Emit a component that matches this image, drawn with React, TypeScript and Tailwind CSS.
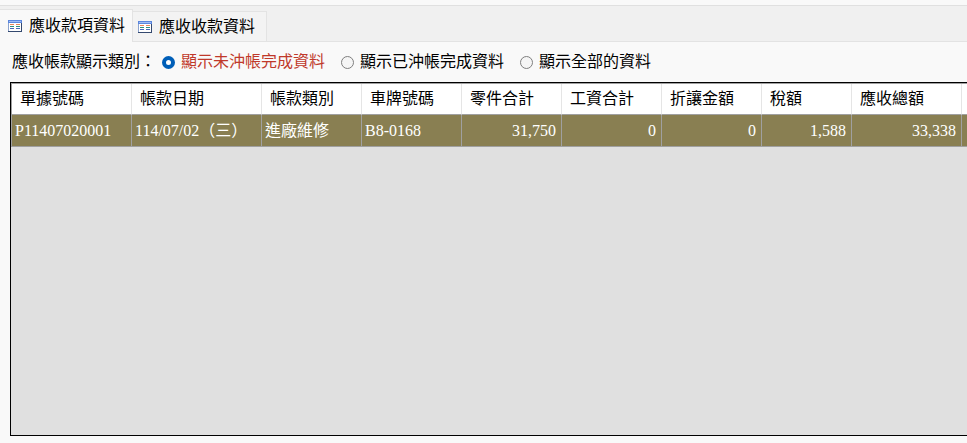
import React, { useState } from 'react';

type Tab = 'receivables' | 'collections';
type Filter = 'open' | 'settled' | 'all';

interface Column {
  key: string;
  label: string;
  width: string;
  numeric?: boolean;
}

const tabs: { id: Tab; label: string }[] = [
  { id: 'receivables', label: '應收款項資料' },
  { id: 'collections', label: '應收收款資料' },
];

const filters: { id: Filter; label: string }[] = [
  { id: 'open', label: '顯示未沖帳完成資料' },
  { id: 'settled', label: '顯示已沖帳完成資料' },
  { id: 'all', label: '顯示全部的資料' },
];

const columns: Column[] = [
  { key: 'no', label: '單據號碼', width: 'w-[120px]' },
  { key: 'date', label: '帳款日期', width: 'w-[130px]' },
  { key: 'type', label: '帳款類別', width: 'w-[100px]' },
  { key: 'plate', label: '車牌號碼', width: 'w-[100px]' },
  { key: 'parts', label: '零件合計', width: 'w-[100px]', numeric: true },
  { key: 'labor', label: '工資合計', width: 'w-[100px]', numeric: true },
  { key: 'discount', label: '折讓金額', width: 'w-[100px]', numeric: true },
  { key: 'tax', label: '稅額', width: 'w-[90px]', numeric: true },
  { key: 'total', label: '應收總額', width: 'w-[110px]', numeric: true },
];

const rows: Record<string, string>[] = [
  {
    no: 'P11407020001',
    date: '114/07/02（三）',
    type: '進廠維修',
    plate: 'B8-0168',
    parts: '31,750',
    labor: '0',
    discount: '0',
    tax: '1,588',
    total: '33,338',
  },
];

const FormIcon: React.FC = () => (
  <svg className="h-3 w-3.5 shrink-0" viewBox="0 0 14 12" shapeRendering="crispEdges" aria-hidden="true">
    <rect width="14" height="12" fill="#8ba3cf" />
    <rect x="13" y="3" width="1" height="9" fill="#34496f" />
    <rect y="11" width="14" height="1" fill="#34496f" />
    <rect x="1" y="3" width="12" height="8" fill="#ffffff" />
    <rect width="14" height="3" fill="#5b86dd" />
    <rect x="1" y="1" width="12" height="1" fill="#9dbcf5" />
    <rect x="2" y="4" width="4" height="1" fill="#e8845a" />
    <rect x="8" y="4" width="4" height="1" fill="#e8845a" />
    <rect x="2" y="6" width="4" height="1" fill="#2f8f7c" />
    <rect x="8" y="6" width="4" height="1" fill="#2f8f7c" />
    <rect x="2" y="8" width="4" height="1" fill="#4669b8" />
    <rect x="8" y="8" width="4" height="1" fill="#4669b8" />
  </svg>
);

const App: React.FC = () => {
  const [tab, setTab] = useState<Tab>('receivables');
  const [filter, setFilter] = useState<Filter>('open');

  return (
    <div className="flex min-h-screen flex-col overflow-hidden bg-[#f9f9f9] pt-[5px] pb-[7px] font-['Liberation_Serif','Noto_Sans_CJK_TC',serif] text-base leading-5 font-normal text-black">
      <div role="tablist" className="flex h-[37px] items-end border-t border-[#e0e0e0] bg-[#f0f0f0]">
        {tabs.map(({ id, label }) => (
          <button
            key={id}
            type="button"
            role="tab"
            aria-selected={tab === id}
            onClick={() => setTab(id)}
            className={
              tab === id
                ? 'flex h-[33px] items-center gap-[7px] border-t border-r border-[#e3e3e3] bg-[#f9f9f9] pr-[7px] pl-2'
                : 'flex h-[31px] items-center gap-[7px] border-t border-r border-b border-[#e3e3e3] bg-[#f3f3f3] pr-[11px] pl-[5px]'
            }
          >
            <FormIcon />
            <span>{label}</span>
          </button>
        ))}
        <div className="flex-1 self-stretch border-b border-[#e3e3e3]" />
      </div>

      <div role="radiogroup" aria-labelledby="filter-label" className="flex h-10 items-center pl-3">
        <span id="filter-label" className="mr-1.5 whitespace-nowrap">應收帳款顯示類別：</span>
        <div className="flex items-center gap-4">
          {filters.map(({ id, label }) => (
            <label
              key={id}
              className={`flex items-center gap-1.5 whitespace-nowrap ${filter === id ? 'text-[#c0392b]' : ''}`}
            >
              <input
                type="radio"
                name="filter"
                checked={filter === id}
                onChange={() => setFilter(id)}
                className="size-[13px] shrink-0 appearance-none rounded-full border border-[#7f7f7f] bg-[#f5f5f5] checked:border-4 checked:border-[#005fb8] checked:bg-white"
              />
              {label}
            </label>
          ))}
        </div>
      </div>

      <div className="ml-[10px] flex-1 overflow-hidden border-y border-l border-black bg-[#e0e0e0]">
        <table className="w-full min-w-[957px] table-fixed border-separate border-spacing-0 border-t border-l border-[#a0a0a0]">
          <thead>
            <tr className="h-[31px] bg-white">
              {columns.map(col => (
                <th
                  key={col.key}
                  scope="col"
                  className={`${col.width} border-r border-b border-r-[#e5e5e5] border-b-[#a0a0a0] px-2 text-left font-normal whitespace-nowrap`}
                >
                  {col.label}
                </th>
              ))}
              <td className="border-b border-[#a0a0a0]" />
            </tr>
          </thead>
          <tbody>
            {rows.map(row => (
              <tr key={row.no} className="h-8 bg-[#897f52] text-white">
                {columns.map(col => (
                  <td
                    key={col.key}
                    className={`border-r border-b border-[#a0a0a0] whitespace-nowrap ${
                      col.numeric ? 'pr-[5px] text-right' : 'pl-[3px]'
                    }`}
                  >
                    {row[col.key]}
                  </td>
                ))}
                <td className="border-b border-[#a0a0a0]" />
              </tr>
            ))}
          </tbody>
        </table>
      </div>
    </div>
  );
};

export default App;
